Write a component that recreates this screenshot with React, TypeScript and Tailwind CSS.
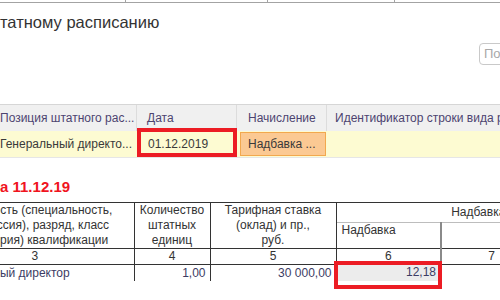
export default function App() {
  return (
    <div className="w-[500px] h-[300px] overflow-hidden bg-white font-['Liberation_Sans',Arial,sans-serif] text-[#333]">
      {/* top toolbar edge */}
      <div className="flex h-[3px] border-b border-[#a3a3a3]">
        <div className="w-[126px] border-r border-[#a3a3a3]" />
        <div className="w-[142px] border-r border-[#a3a3a3]" />
        <div className="w-[127px] border-r border-[#a3a3a3]" />
        <div className="flex-1" />
      </div>

      {/* title */}
      <div className="mt-[9px] h-[20px] text-[16.5px] leading-[20px] text-[#333] whitespace-nowrap">татному расписанию</div>

      {/* search */}
      <div className="mt-[11px] flex">
        <div className="ml-[479px] h-[22px] w-[60px] shrink-0 rounded-[4px] border border-[#c9c9c9] pl-[4px] text-[13px] leading-[20px] text-[#a8a8a8]">Поиск</div>
      </div>

      {/* form table */}
      <div className="mt-[39px] text-[12px]">
        <div className="flex h-[27px] items-center border-t border-[#d6d6d6] bg-[#f0f0f0] text-[#4d4470] whitespace-nowrap">
          <div className="w-[137px] shrink-0 h-full flex items-center border-r border-[#dcdcdc]">Позиция штатного рас...</div>
          <div className="w-[100px] shrink-0 h-full flex items-center border-r border-[#dcdcdc] pl-[10px]">Дата</div>
          <div className="w-[90px] shrink-0 h-full flex items-center border-r border-[#dcdcdc] pl-[11px]">Начисление</div>
          <div className="flex-1 h-full flex items-center pl-[8px] overflow-hidden">Идентификатор строки вида расчета</div>
        </div>
        <div className="flex h-[27px] bg-[#fdfbd2] border-b border-[#e6e6e6] whitespace-nowrap text-[#3a3a3a]">
          <div className="w-[137px] shrink-0 flex items-center">Генеральный директо...</div>
          <div className="relative w-[100px] shrink-0 flex items-center pl-[11px]">
            01.12.2019
            <div className="absolute -top-[3px] left-0 right-0 bottom-0 border-4 border-[#ec1c24]" />
          </div>
          <div className="w-[90px] shrink-0 py-[1px] pl-[3px] pr-[1px]">
            <div className="h-full flex items-center border border-[#f2a84e] bg-[#fbc993] pl-[7px]">Надбавка ...</div>
          </div>
          <div className="flex-1" />
        </div>
      </div>

      {/* red heading */}
      <div className="mt-[21px] h-[16px] text-[15px] leading-[16px] font-bold text-[#f0141e] whitespace-nowrap">а 11.12.19</div>

      {/* printed form table */}
      <table className="mt-[7px] ml-[-64px] w-[684px] max-w-none border-collapse table-fixed text-[12px] leading-[15px] text-[#333]">
        <colgroup>
          <col className="w-[198px]" />
          <col className="w-[76px]" />
          <col className="w-[126px]" />
          <col className="w-[105px]" />
          <col className="w-[100px]" />
          <col className="w-[79px]" />
        </colgroup>
        <tbody>
          <tr className="h-[19px]">
            <td rowSpan={2} className="border-t border-r border-[#333] text-center align-middle p-0 whitespace-nowrap">
              Должность (специальность,<br />профессия), разряд, класс<br />(категория) квалификации
            </td>
            <td rowSpan={2} className="border-t border-r border-[#333] text-center align-middle p-0 whitespace-nowrap">
              Количество<br />штатных<br />единиц
            </td>
            <td rowSpan={2} className="border-t border-r border-[#333] text-center align-middle p-0 whitespace-nowrap">
              Тарифная ставка<br />(оклад) и пр.,<br />руб.
            </td>
            <td colSpan={3} className="border-t border-[#333] text-center align-middle p-0 whitespace-nowrap">Надбавка</td>
          </tr>
          <tr className="h-[25px]">
            <td className="border-t border-[#bdbdbd] align-top pl-[5px] p-0">Надбавка</td>
            <td className="border-t border-l-2 border-t-[#bdbdbd] border-l-[#8a8a8a] p-0" />
            <td className="border-t border-[#bdbdbd] p-0" />
          </tr>
          <tr className="h-[16px] text-center">
            <td className="border-t border-b border-r border-[#333] p-0">3</td>
            <td className="border-t border-b border-r border-[#333] p-0">4</td>
            <td className="border-t border-b border-r border-[#333] p-0">5</td>
            <td className="border-t border-b border-[#333] p-0">6</td>
            <td className="border-t border-b border-l-2 border-t-[#333] border-b-[#333] border-l-[#8a8a8a] p-0">7</td>
            <td className="border-t border-b border-[#333] p-0">8</td>
          </tr>
          <tr className="h-[16px] text-[#3c3c64]">
            <td className="border-r border-[#333] pl-[5px] p-0 whitespace-nowrap">Генеральный директор</td>
            <td className="border-r border-[#333] text-right pr-[4px] p-0">1,00</td>
            <td className="border-r border-[#333] text-right pr-[4px] p-0">30 000,00</td>
            <td className="p-0">
              <div className="relative h-[16px] bg-[#ececec] text-right pr-[4px]">
                12,18
                <div className="absolute -top-[4px] -left-[3px] -right-[2px] -bottom-[8px] border-4 border-[#ec1c24]" />
              </div>
            </td>
            <td className="border-l-2 border-[#8a8a8a] p-0" />
            <td className="p-0" />
          </tr>
        </tbody>
      </table>
    </div>
  )
}
